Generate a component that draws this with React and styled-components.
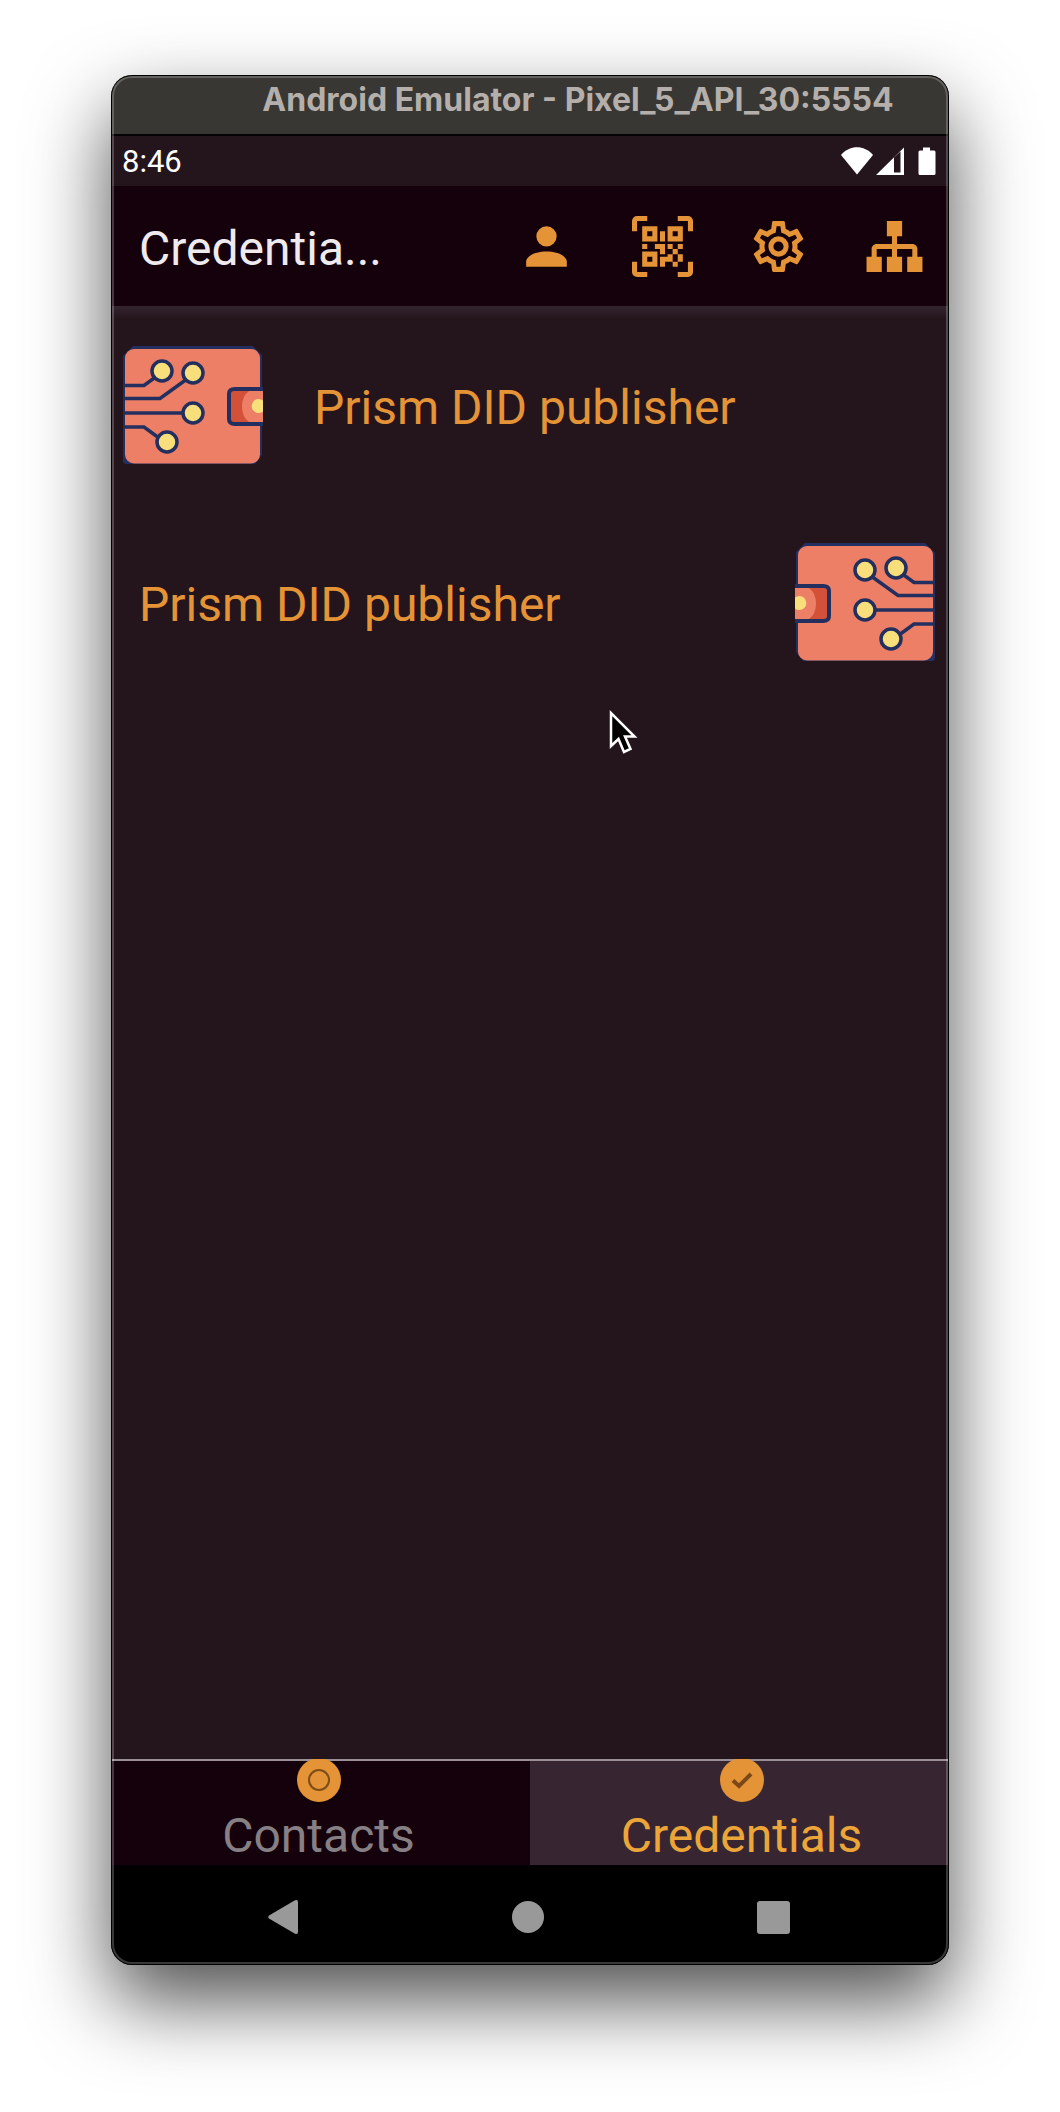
import React from "react";
import styled, { createGlobalStyle, css } from "styled-components";

const color = {
  orange: "#e49336",
  orangeLight: "#eba538",
  surface: "#24151d",
  bar: "#15010c",
  tabActive: "#372631",
  navIcon: "#999999",
  navy: "#232f5e",
  coral: "#ee7f67",
  red: "#d25138",
  yellow: "#f8df7c",
};

const GlobalStyle = createGlobalStyle`
  *, *::before, *::after { box-sizing: border-box; }
  body { margin: 0; background: #fff; font-family: Roboto, sans-serif; }
  svg { display: block; flex: none; }
`;

const Page = styled.div`
  min-height: 100vh;
  display: flex;
  flex-direction: column;
  padding: 75px 111px 147px;
`;

const Window = styled.div`
  position: relative;
  flex: 1;
  display: flex;
  flex-direction: column;
  overflow: hidden;
  border-radius: 21px;
  background: ${color.surface};
  &::after {
    content: "";
    position: absolute;
    inset: 0;
    border-radius: inherit;
    pointer-events: none;
    box-shadow: inset 0 0 0 1px #000, inset 0 0 0 3px rgba(255, 255, 255, 0.22);
  }
`;

const Shadow = styled.div`
  flex: 1;
  display: flex;
  border-radius: 21px;
  box-shadow: 0 36px 80px rgba(0, 0, 0, 0.69);
`;

const TitleBar = styled.header`
  height: 61px;
  padding: 0 0 10px 96px;
  display: flex;
  align-items: center;
  justify-content: center;
  background: #383733;
  border-bottom: 2px solid #050304;
  color: #b5afab;
  font: 700 32px/40px Inter, sans-serif;
  white-space: nowrap;
`;

const StatusBar = styled.div`
  height: 50px;
  padding: 0 13px 0 11px;
  display: flex;
  align-items: center;
  justify-content: space-between;
  color: #fff;
  font-size: 31px;
  line-height: 48px;
`;

const Clock = styled.time`
  padding-top: 2px;
`;

const AppBar = styled.div`
  height: 120px;
  padding: 0 24px 0 28px;
  display: flex;
  align-items: center;
  justify-content: space-between;
  background: ${color.bar};
`;

const Title = styled.h1`
  margin: 0;
  padding-top: 6px;
  color: #efeaee;
  font-size: 48px;
  line-height: 64px;
  font-weight: 400;
`;

const Actions = styled.div`
  display: flex;
  gap: 55px;
`;

const plainButton = css`
  margin: 0;
  padding: 0;
  border: 0;
  background: none;
  color: inherit;
  font: inherit;
  cursor: pointer;
`;

const IconButton = styled.button`
  ${plainButton}
  color: ${color.orange};
`;

const Main = styled.main`
  position: relative;
  flex: 1;
  background: linear-gradient(#34242e, ${color.surface} 13px);
`;

const List = styled.ul`
  margin: 0;
  padding: 0;
  list-style: none;
`;

const Row = styled.button`
  ${plainButton}
  width: 100%;
  height: 197px;
  padding: 2px 14px 0 ${(p) => (p.$trailing ? 28 : 12)}px;
  display: flex;
  align-items: center;
  gap: 51px;
  justify-content: ${(p) => (p.$trailing ? "space-between" : "flex-start")};
`;

const RowLabel = styled.span`
  padding-top: 4px;
  color: ${color.orange};
  font-size: 48px;
  line-height: 64px;
`;

const Pointer = styled.svg`
  position: absolute;
  left: 496px;
  top: 402px;
`;

const Tabs = styled.nav`
  display: grid;
  grid-template-columns: repeat(2, 1fr);
  border-top: 2px solid #9a9096;
`;

const Tab = styled.button`
  ${plainButton}
  height: 104px;
  padding: ${(p) => (p.$active ? "0 0 0 4px" : "0 4px 0 0")};
  display: flex;
  flex-direction: column;
  align-items: center;
  background: ${(p) => (p.$active ? color.tabActive : color.bar)};
  color: ${(p) => (p.$active ? color.orangeLight : "#868085")};
  font-size: 48px;
  line-height: 64px;
`;

const TabLabel = styled.span`
  padding-top: 2px;
`;

const TabDot = styled.span`
  margin-top: -3px;
  width: 44px;
  height: 44px;
  flex: none;
  display: grid;
  place-items: center;
  border-radius: 50%;
  background: ${color.orange};
`;

const SystemNav = styled.nav`
  height: 100px;
  padding: 4px 53px 0 49px;
  display: grid;
  grid-template-columns: repeat(3, 1fr);
  background: #000;
`;

const NavButton = styled.button`
  ${plainButton}
  display: grid;
  place-items: center;
`;

const icons = [
  {
    label: "Profile",
    d: "M12,4A4,4 0 0,1 16,8A4,4 0 0,1 12,12A4,4 0 0,1 8,8A4,4 0 0,1 12,4M12,14C16.42,14 20,15.79 20,18V20H4V18C4,15.79 7.58,14 12,14Z",
  },
  {
    label: "Scan QR code",
    d: "M4,4H10V10H4V4M20,4V10H14V4H20M14,15H16V13H14V11H16V13H18V11H20V13H18V15H20V18H18V20H16V18H13V20H11V16H14V15M16,15V18H18V15H16M4,20V14H10V20H4M6,6V8H8V6H6M16,6V8H18V6H16M6,16V18H8V16H6M4,11H6V13H4V11M9,11H13V15H11V13H9V11M11,6H13V10H11V6M2,2V6H0V2A2,2 0 0,1 2,0H6V2H2M22,0A2,2 0 0,1 24,2V6H22V2H18V0H22M2,18V22H6V24H2A2,2 0 0,1 0,22V18H2M22,22V18H24V22A2,2 0 0,1 22,24H18V22H22Z",
  },
  {
    label: "Settings",
    d: "M12,8A4,4 0 0,1 16,12A4,4 0 0,1 12,16A4,4 0 0,1 8,12A4,4 0 0,1 12,8M12,10A2,2 0 0,0 10,12A2,2 0 0,0 12,14A2,2 0 0,0 14,12A2,2 0 0,0 12,10M10,22C9.75,22 9.54,21.82 9.5,21.58L9.13,18.93C8.5,18.68 7.96,18.34 7.44,17.94L4.95,18.95C4.73,19.03 4.46,18.95 4.34,18.73L2.34,15.27C2.21,15.05 2.27,14.78 2.46,14.63L4.57,12.97L4.5,12L4.57,11L2.46,9.37C2.27,9.22 2.21,8.95 2.34,8.73L4.34,5.27C4.46,5.05 4.73,4.96 4.95,5.05L7.44,6.05C7.96,5.66 8.5,5.32 9.13,5.07L9.5,2.42C9.54,2.18 9.75,2 10,2H14C14.25,2 14.46,2.18 14.5,2.42L14.87,5.07C15.5,5.32 16.04,5.66 16.56,6.05L19.05,5.05C19.27,4.96 19.54,5.05 19.66,5.27L21.66,8.73C21.79,8.95 21.73,9.22 21.54,9.37L19.43,11L19.5,12L19.43,13L21.54,14.63C21.73,14.78 21.79,15.05 21.66,15.27L19.66,18.73C19.54,18.95 19.27,19.04 19.05,18.95L16.56,17.95C16.04,18.34 15.5,18.68 14.87,18.93L14.5,21.58C14.46,21.82 14.25,22 14,22H10M11.25,4L10.88,6.61C9.68,6.86 8.62,7.5 7.85,8.39L5.44,7.35L4.69,8.65L6.8,10.2C6.4,11.37 6.4,12.64 6.8,13.8L4.68,15.36L5.43,16.66L7.86,15.62C8.63,16.5 9.68,17.14 10.87,17.38L11.24,20H12.76L13.13,17.39C14.32,17.14 15.37,16.5 16.14,15.62L18.57,16.66L19.32,15.36L17.2,13.81C17.6,12.64 17.6,11.37 17.2,10.2L19.31,8.65L18.56,7.35L16.15,8.39C15.38,7.5 14.32,6.86 13.12,6.62L12.75,4H11.25Z",
  },
  {
    label: "Network",
    d: "M9,2V8H11V11H5C3.89,11 3,11.89 3,13V16H1V22H7V16H5V13H11V16H9V22H15V16H13V13H19V16H17V22H23V16H21V13C21,11.89 20.11,11 19,11H13V8H15V2H9Z",
  },
];

function StatusIcons() {
  return (
    <svg width="96" height="28" viewBox="0 0 96 28" fill="#fff" aria-hidden="true">
      <path d="M1 8C10-2.200 24-2.200 33 8L17 27.500Z" />
      <path fillRule="evenodd" d="M36 28L64 0.500V28ZM54 10.500V25.500H60.500V4.500Z" />
      <path d="M83 0.500h7v3h4a1.500 1.500 0 0 1 1.500 1.500v21.500a1.500 1.500 0 0 1-1.500 1.500h-14a1.500 1.500 0 0 1-1.500-1.500V5a1.500 1.500 0 0 1 1.500-1.500h3z" />
    </svg>
  );
}

const pads = [
  [39, 25],
  [70, 27],
  [70, 67],
  [44, 96],
];

/* Circuit-board half of a credential; `flip` draws the half facing the other way. */
function ChipArt({ flip }) {
  return (
    <svg width="140" height="119" viewBox="0 0 140 119" aria-hidden="true">
      <g transform={flip ? "translate(140 0) scale(-1 1)" : undefined}>
        <path
          d="M10 0H130L139 9V109L132 118H2L0 116V10Z"
          fill={color.navy}
        />
        <rect x="2" y="3" width="135" height="114.500" rx="9" fill={color.coral} />
        <g fill="none" stroke={color.navy} strokeWidth="3.500">
          <path d="M1 39.500H21L34 30" />
          <path d="M1 52.500H37L64 33" />
          <path d="M1 67H60" />
          <path d="M1 81H21L36 92" />
        </g>
        {pads.map(([x, y]) => (
          <circle key={`${x}-${y}`} cx={x} cy={y} r="10" fill={color.yellow} stroke={color.navy} strokeWidth="3.500" />
        ))}
        <path d="M140 41H112Q104 41 104 48V73Q104 80 112 80H140Z" fill={color.navy} />
        <path d="M140 45H111Q108 45 108 48V73Q108 76 111 76H140Z" fill={color.red} />
        <path d="M140 45H126Q119 50 119 60.500Q119 71 126 76H140Z" fill={color.coral} />
        <path d="M140 54.500A7 7 0 1 0 140 65.500Z" fill={color.yellow} />
      </g>
    </svg>
  );
}

export default function App() {
  return (
    <Page>
      <GlobalStyle />
      <Shadow>
        <Window>
          <TitleBar>Android Emulator - Pixel_5_API_30:5554</TitleBar>
          <StatusBar>
            <Clock>8:46</Clock>
            <StatusIcons />
          </StatusBar>
          <AppBar>
            <Title>Credentia...</Title>
            <Actions>
              {icons.map((icon) => (
                <IconButton key={icon.label} type="button" aria-label={icon.label}>
                  <svg width="61" height="61" viewBox="0 0 24 24" fill="currentColor">
                    <path d={icon.d} />
                  </svg>
                </IconButton>
              ))}
            </Actions>
          </AppBar>
          <Main>
            <List>
              <li>
                <Row type="button">
                  <ChipArt />
                  <RowLabel>Prism DID publisher</RowLabel>
                </Row>
              </li>
              <li>
                <Row type="button" $trailing>
                  <RowLabel>Prism DID publisher</RowLabel>
                  <ChipArt flip />
                </Row>
              </li>
            </List>
            <Pointer width="34" height="48" viewBox="0 0 34 48" aria-hidden="true">
              <path
                d="M4 5V38L11.500 31L17 44L23.500 41L18 28.500H27.500Z"
                fill="#000"
                stroke="#fff"
                strokeWidth="2.500"
              />
            </Pointer>
          </Main>
          <Tabs>
            <Tab type="button">
              <TabDot>
                <svg width="22" height="22" viewBox="0 0 22 22" fill="none" stroke="#7d4d17" strokeWidth="2">
                  <circle cx="11" cy="11" r="10" />
                </svg>
              </TabDot>
              <TabLabel>Contacts</TabLabel>
            </Tab>
            <Tab type="button" $active aria-current="page">
              <TabDot>
                <svg width="22" height="22" viewBox="0 0 22 22" fill="none" stroke="#7d4818" strokeWidth="4">
                  <path d="M2 11.500L8 17L20 5" />
                </svg>
              </TabDot>
              <TabLabel>Credentials</TabLabel>
            </Tab>
          </Tabs>
          <SystemNav>
            <NavButton type="button" aria-label="Back">
              <svg width="30" height="36" viewBox="0 0 30 36" fill={color.navIcon}>
                <path d="M27 1.300Q30 0 30 3V33Q30 36 27 34.700L1 19.500Q-0.500 18 1 16.500Z" />
              </svg>
            </NavButton>
            <NavButton type="button" aria-label="Home">
              <svg width="32" height="32" viewBox="0 0 32 32" fill={color.navIcon}>
                <circle cx="16" cy="16" r="16" />
              </svg>
            </NavButton>
            <NavButton type="button" aria-label="Recent apps">
              <svg width="33" height="33" viewBox="0 0 33 33" fill={color.navIcon}>
                <rect width="33" height="33" rx="3" />
              </svg>
            </NavButton>
          </SystemNav>
        </Window>
      </Shadow>
    </Page>
  );
}
